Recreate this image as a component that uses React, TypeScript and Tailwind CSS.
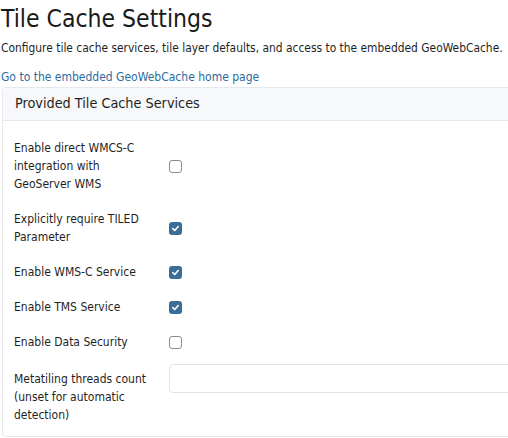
import React from "react";

const font = { fontFamily: '"DejaVu Sans Condensed", "DejaVu Sans", sans-serif' };

function Check({ checked }: { checked: boolean }) {
  return checked ? (
    <span className="flex h-[13px] w-[13px] items-center justify-center rounded-[3px] bg-[#3b6d99]">
      <svg width="9" height="9" viewBox="0 0 10 10">
        <path d="M2 5.2 L4.2 7.2 L8 2.8" fill="none" stroke="#fff" strokeWidth="1.8" strokeLinecap="round" strokeLinejoin="round" />
      </svg>
    </span>
  ) : (
    <span className="block h-[13px] w-[13px] rounded-[3px] border border-[#8a8a8a] bg-white" />
  );
}

function Row({ label, children }: { label: React.ReactNode; children: React.ReactNode }) {
  return (
    <div className="flex items-center">
      <div className="w-[155px] shrink-0 pr-[16px] text-[12px] leading-[18px] text-[#1f1f1f]">{label}</div>
      <div className="flex flex-1 items-center">{children}</div>
    </div>
  );
}

export default function App() {
  return (
    <div className="h-[438px] w-[508px] overflow-hidden bg-white text-[#1f1f1f]" style={font}>
      <div className="w-[560px]">
        <h1 className="pl-[1px] pt-[3px] text-[24.5px] leading-[32px] font-normal text-[#1a1a1a]">Tile Cache Settings</h1>
        <p className="mt-[4px] pl-[1px] text-[11.9px] leading-[18px] text-[#1f1f1f]">
          Configure tile cache services, tile layer defaults, and access to the embedded GeoWebCache.
        </p>
        <a className="mt-[11px] block pl-[1px] text-[12px] leading-[18px] text-[#2d6b9f]">
          Go to the embedded GeoWebCache home page
        </a>
        <div className="ml-[2px] mt-[1px] rounded-[4px] border border-[#e6e8eb]">
          <div className="flex h-[33px] items-center border-b border-[#e6e8eb] bg-[#f7f8fa] pl-[12px] text-[14.3px] text-[#1f1f1f]">
            Provided Tile Cache Services
          </div>
          <div className="flex flex-col gap-[17px] pl-[11px] pt-[18px] pb-[12px]">
            <Row label={<>Enable direct WMCS-C integration with GeoServer WMS</>}>
              <Check checked={false} />
            </Row>
            <Row label="Explicitly require TILED Parameter">
              <Check checked />
            </Row>
            <Row label="Enable WMS-C Service">
              <Check checked />
            </Row>
            <Row label="Enable TMS Service">
              <Check checked />
            </Row>
            <Row label="Enable Data Security">
              <Check checked={false} />
            </Row>
            <div className="flex items-start pt-[2px]">
              <div className="w-[155px] shrink-0 pr-[16px] text-[12px] leading-[18px] text-[#1f1f1f]">
                Metatiling threads count (unset for automatic detection)
              </div>
              <div className="mt-[-6px] h-[29px] flex-1 rounded-[4px] border border-[#e3e3e3] bg-white" />
            </div>
          </div>
        </div>
      </div>
    </div>
  );
}
